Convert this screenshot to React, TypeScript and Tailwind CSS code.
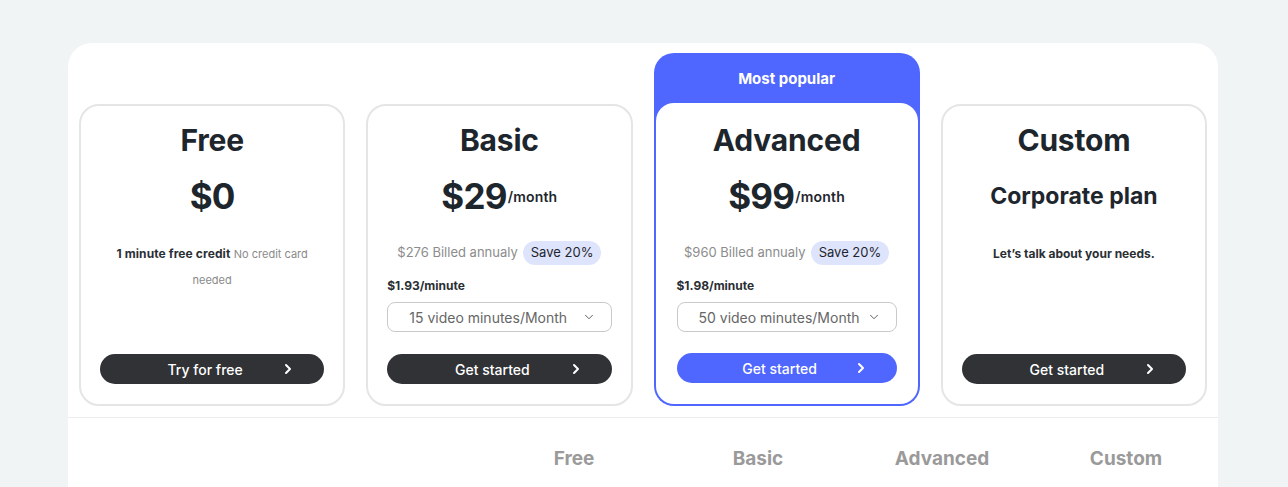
import { ChevronDown, ChevronRight } from 'lucide-react';

type Plan = {
  name: string;
  price?: string;
  subtitle?: string;
  billed?: string;
  perMinute?: string;
  minutes?: string;
  cta: string;
  popular?: boolean;
};

const plans: Plan[] = [
  { name: 'Free', price: '$0', cta: 'Try for free' },
  {
    name: 'Basic',
    price: '$29',
    billed: '$276 Billed annualy',
    perMinute: '$1.93/minute',
    minutes: '15 video minutes/Month',
    cta: 'Get started',
  },
  {
    name: 'Advanced',
    price: '$99',
    billed: '$960 Billed annualy',
    perMinute: '$1.98/minute',
    minutes: '50 video minutes/Month',
    cta: 'Get started',
    popular: true,
  },
  { name: 'Custom', subtitle: 'Corporate plan', cta: 'Get started' },
];

function PlanBody({ plan }: { plan: Plan }) {
  return (
    <>
      <h2 className="text-[30px] leading-[32px] font-bold tracking-[-0.2px] text-[#1e262d]">
        {plan.name}
      </h2>

      {plan.price && (
        <div className="mt-[18px] flex h-[44px] items-center justify-center">
          <span className="text-[35px] leading-[44px] font-bold tracking-[-0.8px] text-[#1e262d]">
            {plan.price}
          </span>
          {plan.name !== 'Free' && (
            <span className="ml-[1px] text-[14px] font-semibold tracking-[0.2px] text-[#1e262d]">/month</span>
          )}
        </div>
      )}
      {plan.subtitle && (
        <div className="mt-[18px] flex h-[44px] items-center justify-center text-[23px] font-bold text-[#1e262d]">
          {plan.subtitle}
        </div>
      )}

      {plan.name === 'Free' && (
        <p className="mt-[23px] px-[10px] text-[12px] leading-[26px]">
          <span className="font-bold tracking-[0.1px] text-[#2a2f34]">1 minute free credit</span>{' '}
          <span className="text-[11px] text-[#8a8a8a]">No credit card needed</span>
        </p>
      )}
      {plan.name === 'Custom' && (
        <p className="mt-[23px] text-[12px] leading-[26px] font-bold text-[#2a2f34]">
          Let’s talk about your needs.
        </p>
      )}

      {plan.billed && (
        <div className="mt-[23px] flex h-[24px] items-center justify-center gap-[5px] text-[13px]">
          <span className="text-[#8c8c8c]">{plan.billed}</span>
          <span className="rounded-full bg-[#dfe4fd] px-[8px] py-[2px] text-[#1e262d]">Save 20%</span>
        </div>
      )}
      {plan.perMinute && (
        <div className="mt-[13px] text-left text-[12px] leading-[16px] font-bold text-[#2a2f34]">
          {plan.perMinute}
        </div>
      )}
      {plan.minutes && (
        <div className="mt-[8px] flex h-[30px] items-center justify-between rounded-[8px] border border-[#c9c9c9] pr-[15px] pl-[21px] text-[14px] text-[#666]">
          <span>{plan.minutes}</span>
          <ChevronDown size={14} strokeWidth={1.6} className="text-[#555]" />
        </div>
      )}

      <button
        className={`relative mt-auto flex h-[30px] w-full items-center justify-center rounded-full text-[14px] font-medium text-white ${
          plan.popular ? 'bg-[#4f66ff]' : 'bg-[#303236]'
        }`}
      >
        <span className="mr-[14px]">{plan.cta}</span>
        <ChevronRight size={16} strokeWidth={3} className="absolute right-[28px]" />
      </button>
    </>
  );
}

export default function App() {
  return (
    <div className="min-h-[487px] bg-[#f1f4f5] pt-[43px] pl-[68px] font-['Inter',sans-serif]">
      <div className="w-[1150px] overflow-hidden rounded-t-[24px] bg-white">
        <div className="grid grid-cols-4 items-end gap-x-[21px] px-[11px] pt-[10px] pb-[11px]">
          {plans.map((plan) =>
            plan.popular ? (
              <div key={plan.name} className="flex flex-col rounded-[20px] bg-[#4f66ff] p-[2px]">
                <div className="flex h-[48px] items-center justify-center text-[15px] font-bold text-white">
                  Most popular
                </div>
                <div className="flex h-[301px] flex-col rounded-[18px] bg-white px-[21px] pt-[21px] pb-[21px] text-center">
                  <PlanBody plan={plan} />
                </div>
              </div>
            ) : (
              <div
                key={plan.name}
                className="flex h-[302px] flex-col rounded-[20px] border-2 border-[#e5e5e5] bg-white px-[19px] pt-[18px] pb-[20px] text-center"
              >
                <PlanBody plan={plan} />
              </div>
            ),
          )}
        </div>
        <div className="border-t border-[#ececec]">
          <div className="grid grid-cols-[414px_184px_184px_184px_184px] pt-[29px] pb-[18px]">
            <div />
            {['Free', 'Basic', 'Advanced', 'Custom'].map((n) => (
              <div key={n} className="text-center text-[19px] leading-[24px] font-bold text-[#9a9a9a]">
                {n}
              </div>
            ))}
          </div>
        </div>
      </div>
    </div>
  );
}
